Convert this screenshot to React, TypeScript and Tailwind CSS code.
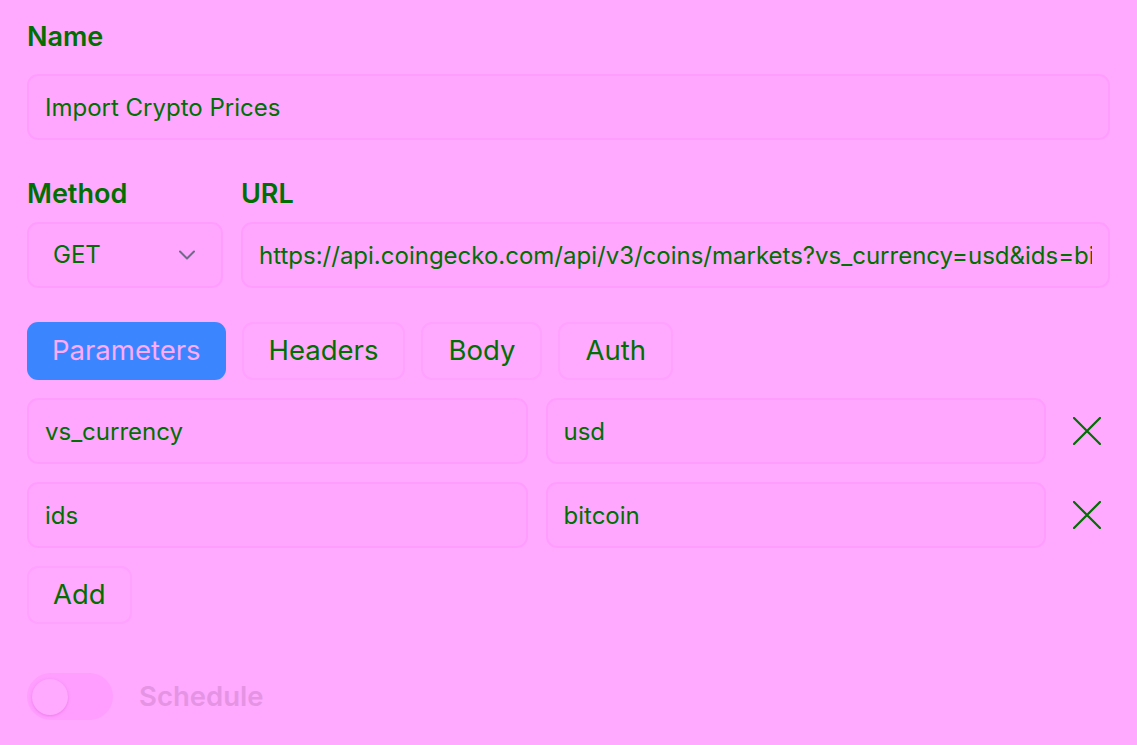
import React from "react";

const inputCls =
  "w-full h-[66px] rounded-[11px] border-2 border-[#ff9dff] bg-[#ffa7ff] px-[16px] text-[24px] text-[#006e00] font-['Inter'] outline-none";

function XIcon() {
  return (
    <svg width="28" height="28" viewBox="0 0 28 28" fill="none">
      <path d="M1 1L27 27M27 1L1 27" stroke="#006e00" strokeWidth="2.2" strokeLinecap="square" />
    </svg>
  );
}

function ParamRow({ k, v }: { k: string; v: string }) {
  return (
    <div className="flex items-center gap-[18px]">
      <input className={inputCls + " flex-1"} defaultValue={k} readOnly />
      <input className={inputCls + " flex-1"} defaultValue={v} readOnly />
      <button className="w-[46px] h-[66px] flex items-center justify-center">
        <XIcon />
      </button>
    </div>
  );
}

export default function App() {
  const tabs = ["Headers", "Body", "Auth"];
  return (
    <div className="min-h-screen bg-[#ffaaff] px-[27px] pt-[21px] font-['Inter',sans-serif] text-[#006e00]">
      <div className="h-[32px] leading-[32px] text-[27px] font-semibold">Name</div>
      <input className={inputCls + " mt-[21px]"} defaultValue="Import Crypto Prices" readOnly />

      <div className="flex gap-[18px] mt-[38px]">
        <div className="w-[196px] shrink-0">
          <div className="h-[32px] leading-[32px] text-[27px] font-semibold">Method</div>
          <div className="mt-[12px] h-[66px] rounded-[11px] border-2 border-[#ff9dff] bg-[#ffa7ff] pl-[24px] pr-[25px] flex items-center justify-between text-[24px]">
            <span>GET</span>
            <svg width="18" height="12" viewBox="0 0 18 12" fill="none">
              <path d="M2 2.5L9 9.5L16 2.5" stroke="#6f6a86" strokeWidth="2" strokeLinecap="round" strokeLinejoin="round" />
            </svg>
          </div>
        </div>
        <div className="flex-1 min-w-0">
          <div className="h-[32px] leading-[32px] text-[27px] font-semibold">URL</div>
          <input
            className={inputCls + " mt-[12px]"}
            defaultValue="https://api.coingecko.com/api/v3/coins/markets?vs_currency=usd&ids=bitcoin"
            readOnly
          />
        </div>
      </div>

      <div className="flex gap-[16px] mt-[34px]">
        <button className="h-[58px] px-[25px] rounded-[11px] bg-[#3b86ff] text-[27.5px] text-[#ffaaff] font-['Inter']">
          Parameters
        </button>
        {tabs.map((t) => (
          <button
            key={t}
            className="h-[58px] px-[25px] rounded-[11px] border-2 border-[#ffa1ff] text-[27.5px] text-[#006e00] font-['Inter']"
          >
            {t}
          </button>
        ))}
      </div>

      <div className="mt-[18px] flex flex-col gap-[18px]">
        <ParamRow k="vs_currency" v="usd" />
        <ParamRow k="ids" v="bitcoin" />
      </div>

      <button className="mt-[18px] h-[58px] px-[24px] rounded-[11px] border-2 border-[#ffa1ff] text-[27.5px] text-[#006e00] font-['Inter']">
        Add
      </button>

      <div className="mt-[49px] flex items-center gap-[26px]">
        <div className="w-[86px] h-[47px] rounded-full bg-[#ff9eff] flex items-center pl-[5px]">
          <div className="w-[36px] h-[36px] rounded-full bg-[#ffa9ff] shadow-[0_1px_3px_rgba(200,60,200,0.35)]" />
        </div>
        <span className="text-[27.5px] font-semibold text-[#e594e4]">Schedule</span>
      </div>
    </div>
  );
}
